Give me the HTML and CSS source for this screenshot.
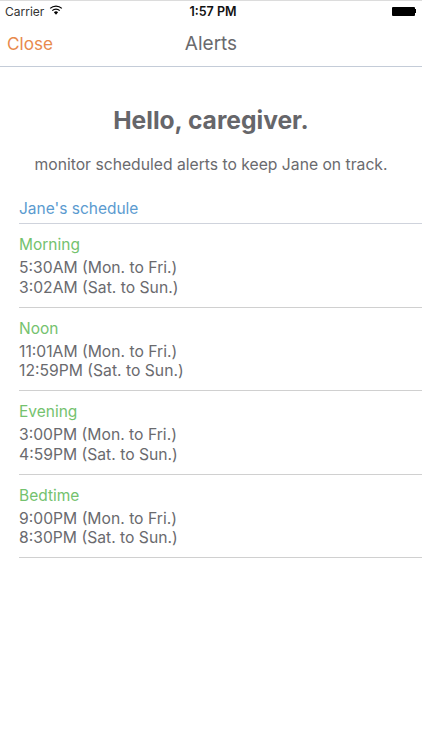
FILE: index.html
```html
<!DOCTYPE html>
<html lang="en">
<head>
<meta charset="utf-8">
<title>Alerts</title>
<link rel="stylesheet" href="styles.css">
</head>
<body>
<div class="status">
  <div class="status-left">
    <span>Carrier</span>
    <svg class="wifi" viewBox="0 0 14 10" width="14" height="10"><path d="M7 9.8 4.9 7.3a3 3 0 0 1 4.2 0Z" fill="#000"/><path d="M3.3 5.6a5.3 5.3 0 0 1 7.4 0" fill="none" stroke="#000" stroke-width="1.3"/><path d="M1.2 3.4a8.3 8.3 0 0 1 11.6 0" fill="none" stroke="#000" stroke-width="1.3"/></svg>
  </div>
  <div class="status-time">1:57 PM</div>
  <div class="status-right">
    <span class="battery"></span><span class="battery-tip"></span>
  </div>
</div>
<header class="nav">
  <a class="nav-close">Close</a>
  <h1 class="nav-title">Alerts</h1>
</header>
<main class="content">
  <h2 class="hello">Hello, caregiver.</h2>
  <p class="lead">monitor scheduled alerts to keep Jane on track.</p>
  <h3 class="sched">Jane's schedule</h3>
  <section class="slot">
    <h4>Morning</h4>
    <p>5:30AM (Mon. to Fri.)</p>
    <p>3:02AM (Sat. to Sun.)</p>
  </section>
  <section class="slot">
    <h4>Noon</h4>
    <p>11:01AM (Mon. to Fri.)</p>
    <p>12:59PM (Sat. to Sun.)</p>
  </section>
  <section class="slot">
    <h4>Evening</h4>
    <p>3:00PM (Mon. to Fri.)</p>
    <p>4:59PM (Sat. to Sun.)</p>
  </section>
  <section class="slot">
    <h4>Bedtime</h4>
    <p>9:00PM (Mon. to Fri.)</p>
    <p>8:30PM (Sat. to Sun.)</p>
  </section>
</main>
</body>
</html>
```
FILE: styles.css
```css
* { box-sizing: border-box; margin: 0; padding: 0; }
html, body { background: #fff; }
body { width: 422px; height: 750px; overflow: hidden; font-family: Inter, "Liberation Sans", sans-serif; color: #6a6a6e; }
.status { height: 21px; border-top: 1px solid #dcdcdc; padding: 0 5px; display: grid; grid-template-columns: 1fr auto 1fr; align-items: center; color: #000; font-size: 12px; }
.status-left { display: flex; align-items: center; gap: 5px; color: #333; }
.status-left .wifi { margin-top: -2px; }
.status-time { font-weight: 600; font-size: 12.5px; color: #111; margin-left: 4px; }
.status-right { display: flex; justify-content: flex-end; align-items: center; padding-right: 1px; }
.battery { width: 23px; height: 9px; background: #000; border-radius: 1px; }
.battery-tip { width: 1.5px; height: 4px; background: #000; }
.nav { height: 46px; border-bottom: 1px solid #c4ccd8; display: flex; align-items: center; justify-content: center; position: relative; }
.nav-close { position: absolute; left: 7px; top: 12px; font-size: 17.2px; color: #e88a4c; }
.nav-title { font-size: 19px; font-weight: 400; color: #6a6a6e; }
.content { padding: 0 0 0 19px; }
.hello { font-size: 24.6px; font-weight: 700; color: #66666a; text-align: center; margin: 38px 0 0 -19px; line-height: 30px; }
.lead { font-size: 15.7px; color: #6a6a6e; text-align: center; margin: 20px 0 0 -19px; line-height: 20px; }
.sched { font-size: 15.5px; font-weight: 400; color: #5b9bd0; margin-top: 24px; height: 25px; line-height: 20px; border-bottom: 1px solid #cfd3dc; }
.slot { height: 83.6px; border-bottom: 1px solid #d0d0d0; padding-top: 11px; }
.slot h4 { font-size: 15.5px; font-weight: 400; color: #74c26e; line-height: 20px; margin-bottom: 3px; }
.slot p { font-size: 15.7px; line-height: 19.5px; color: #6a6a6e; }
```
